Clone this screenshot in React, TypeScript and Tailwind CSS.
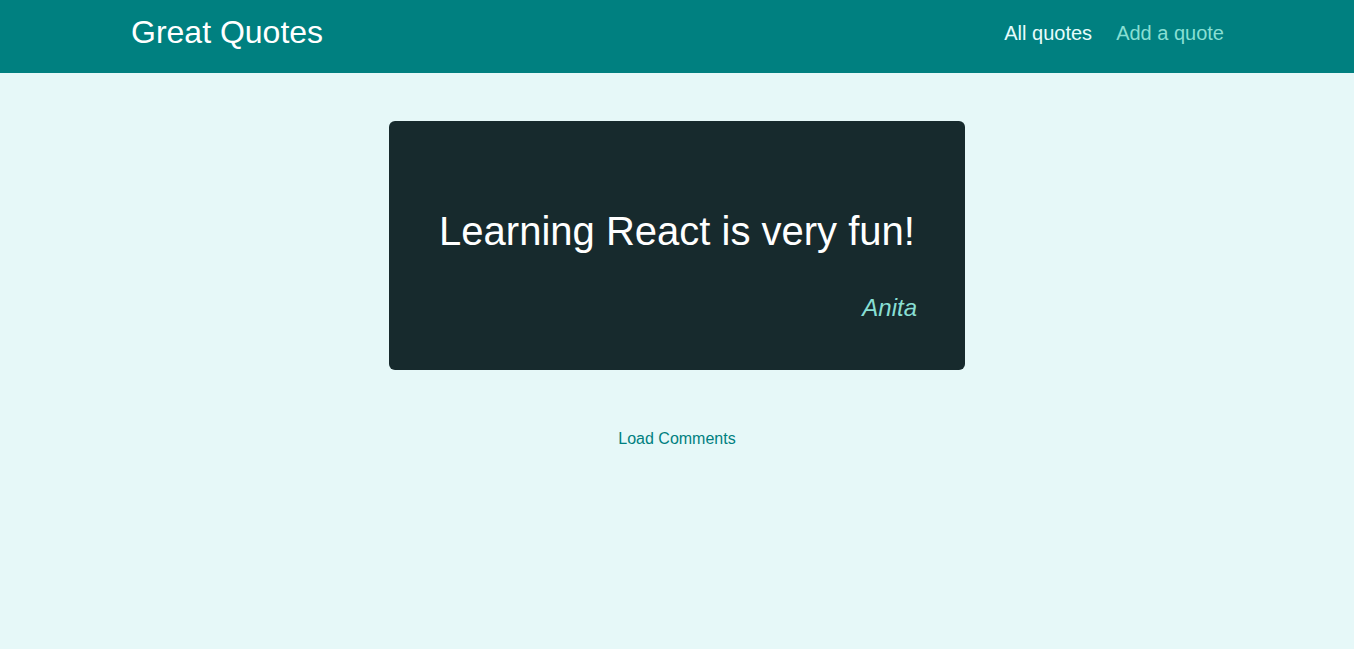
import React from "react";

export default function App() {
  return (
    <div className="min-h-[649px] bg-[#e6f8f8]" style={{ fontFamily: '"Liberation Sans", Arial, sans-serif' }}>
      <header className="h-[73px] bg-[#008080] flex items-center justify-between pl-[131px] pr-[130px] pb-[9px]">
        <div className="text-[32px] text-white leading-none">Great Quotes</div>
        <nav className="pt-[2px]">
          <ul className="flex gap-[24px] text-[20px] leading-[normal]">
            <li className="text-[#e6fcfc]">All quotes</li>
            <li className="text-[#88dfd3]">Add a quote</li>
          </ul>
        </nav>
      </header>
      <main>
        <figure className="mx-auto mt-[48px] w-[576px] rounded-[6px] bg-[#172a2d] p-[48px] text-white">
          <p className="text-[40px] leading-[normal] text-center my-[40px]">Learning React is very fun!</p>
          <figcaption className="text-[24px] leading-[normal] italic text-right text-[#88dfd3]">Anita</figcaption>
        </figure>
        <div className="text-center mt-[57px]">
          <a className="text-[16px] text-[#008080] cursor-pointer">Load Comments</a>
        </div>
      </main>
    </div>
  );
}
